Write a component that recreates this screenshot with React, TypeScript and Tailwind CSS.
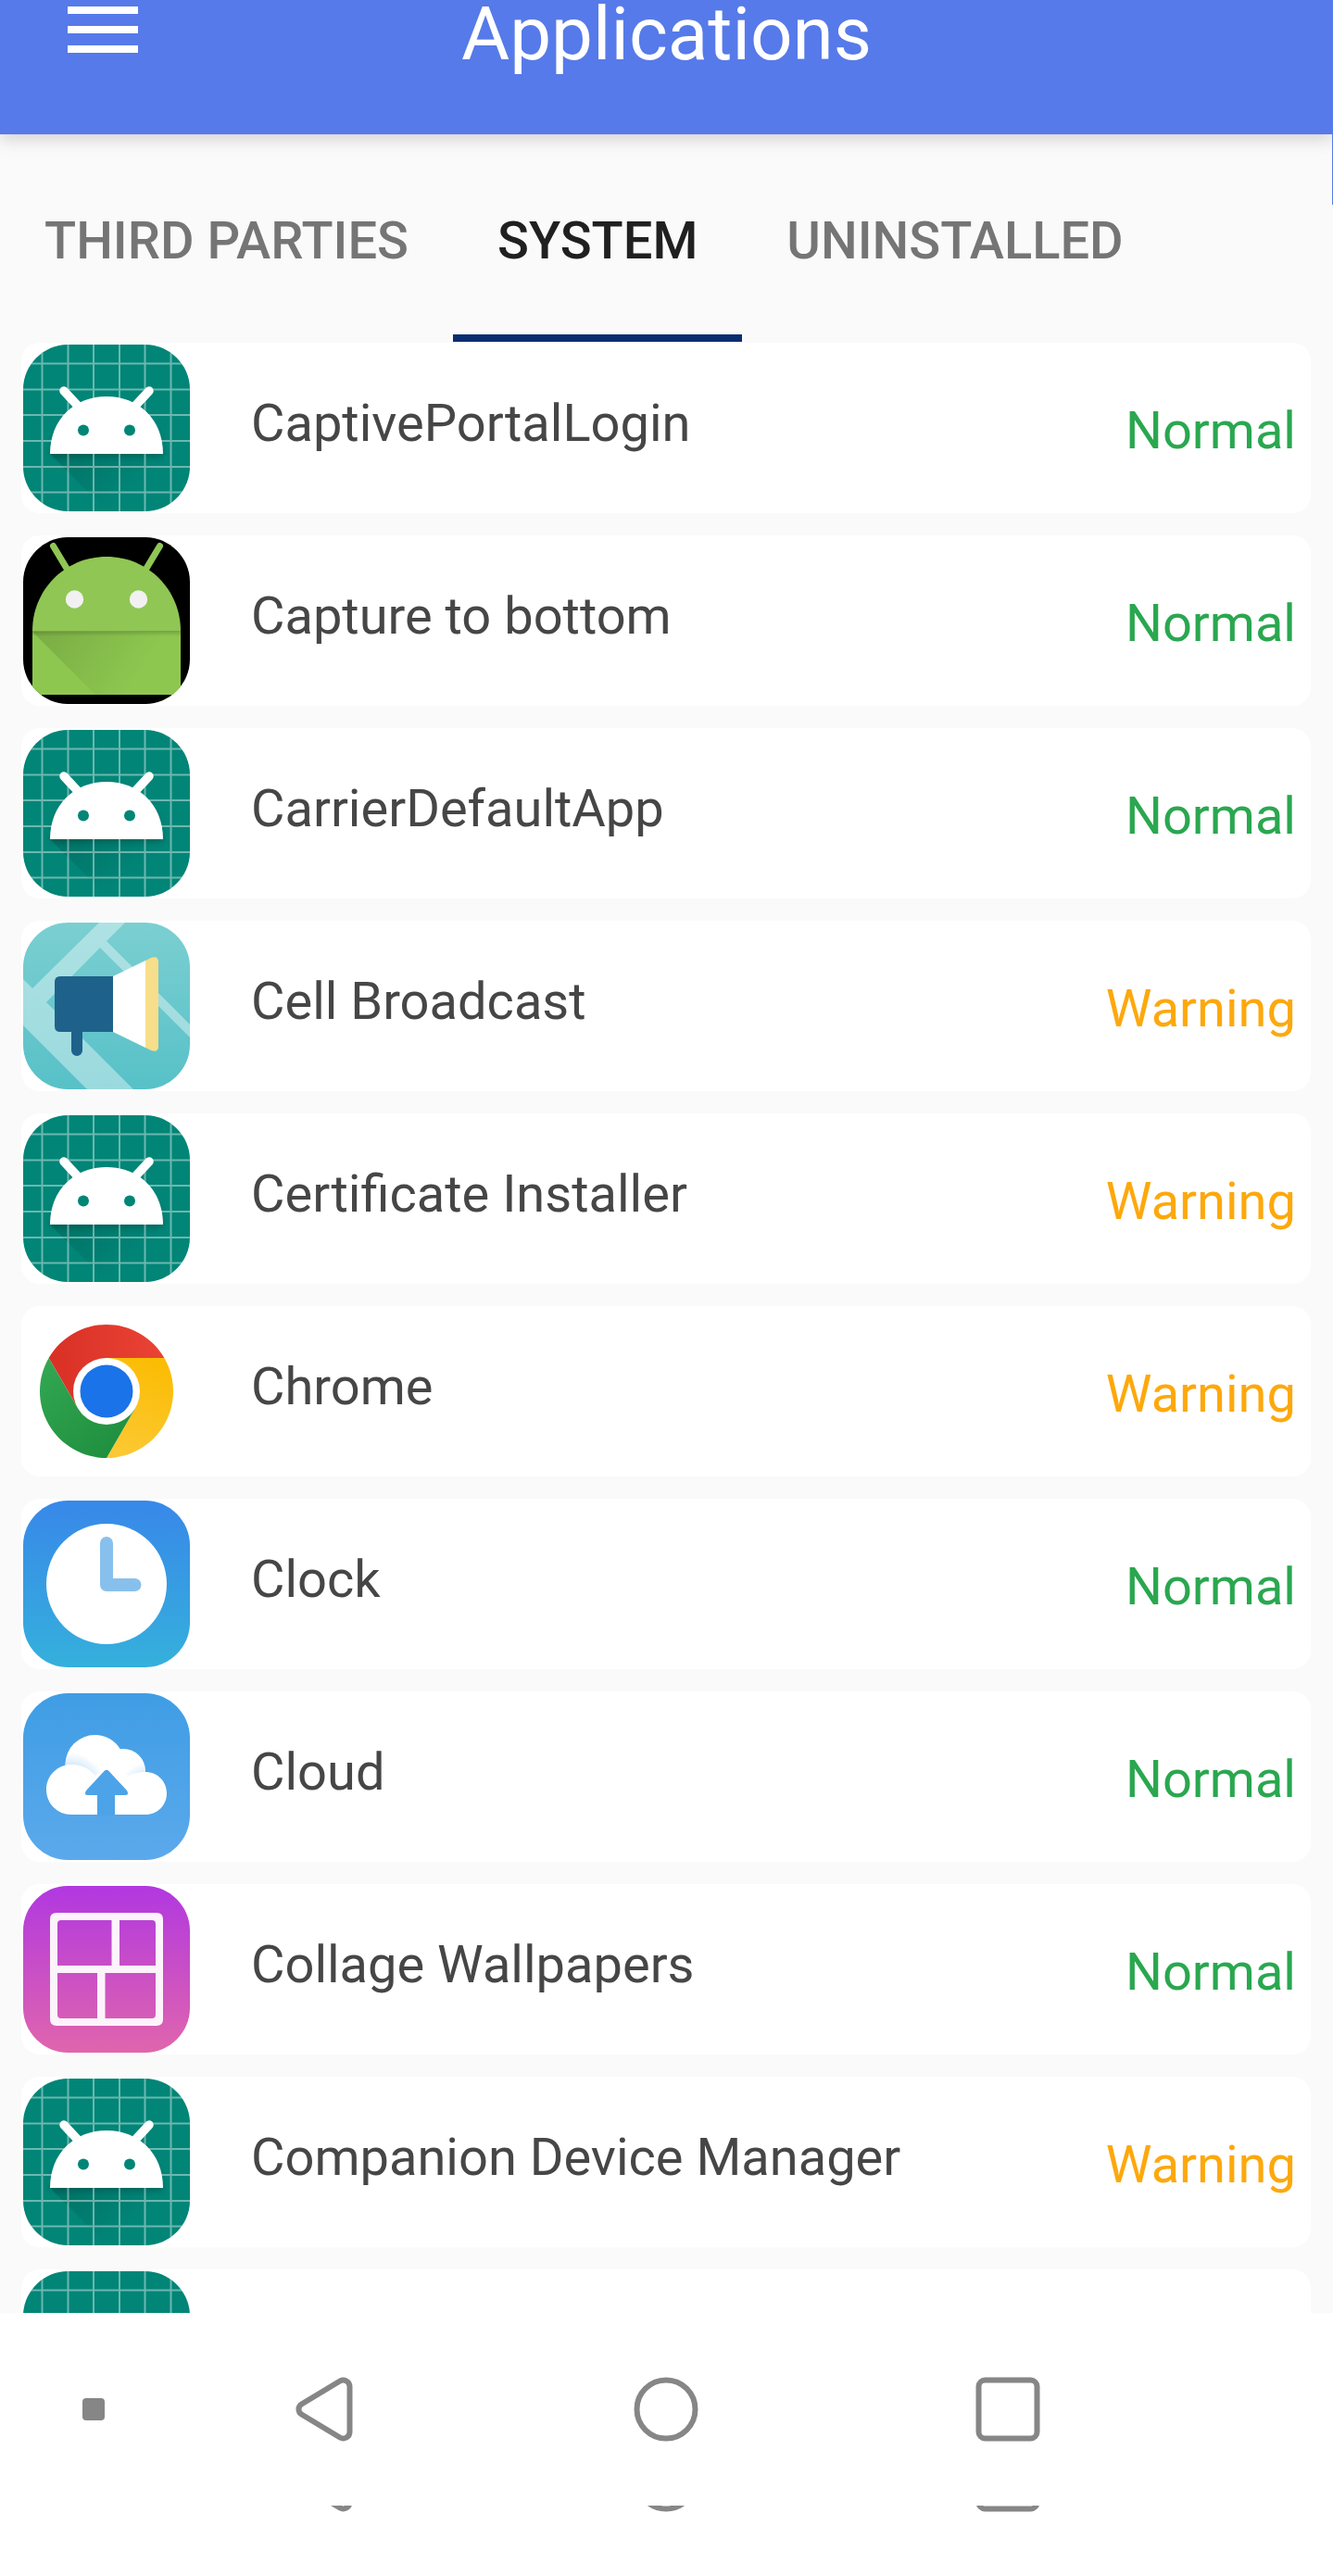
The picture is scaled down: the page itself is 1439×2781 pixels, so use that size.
import type { ReactNode } from "react";

function Tile({ children }: { children: ReactNode }) {
  return (
    <svg viewBox="0 0 180 180" className="size-[180px] shrink-0" aria-hidden="true">
      <defs>
        <clipPath id="tile-clip">
          <path d="M48 0H132C158 0 180 22 180 48V132C180 158 158 180 132 180H48C22 180 0 158 0 132V48C0 22 22 0 48 0Z" />
        </clipPath>
      </defs>
      <g clipPath="url(#tile-clip)">{children}</g>
    </svg>
  );
}

function DefaultIcon() {
  return (
    <Tile>
      <defs>
        <linearGradient id="def-shade" gradientUnits="userSpaceOnUse" x1="45" y1="100" x2="100" y2="170">
          <stop offset="0" stopColor="#000" stopOpacity=".16" />
          <stop offset="1" stopColor="#000" stopOpacity="0" />
        </linearGradient>
        <filter id="def-blur" x="-20%" y="-20%" width="140%" height="140%">
          <feGaussianBlur stdDeviation="3" />
        </filter>
      </defs>
      <rect width="180" height="180" fill="#018577" />
      <path d="M29 118L91 180H180V118Z" fill="url(#def-shade)" />
      <path d="M30 121A60 60 0 0 1 150 121Z" fill="#000" opacity=".2" filter="url(#def-blur)" />
      <path
        d="M20.500 0V180M48.500 0V180M76 0V180M104 0V180M131.500 0V180M159.500 0V180M0 20.500H180M0 48.500H180M0 76H180M0 104H180M0 132H180M0 159.500H180"
        stroke="#fff"
        strokeOpacity=".42"
        strokeWidth="2"
      />
      <path d="M44 50L58 65M136 50L122 65" stroke="#fff" strokeWidth="9.500" strokeLinecap="round" />
      <path d="M29 118C29 80 56 56 90 56S151 80 151 118Z" fill="#fff" />
      <circle cx="65" cy="92.500" r="6" fill="#018577" />
      <circle cx="115" cy="92.500" r="6" fill="#018577" />
    </Tile>
  );
}

function CaptureIcon() {
  return (
    <Tile>
      <defs>
        <linearGradient id="cap-shade" gradientUnits="userSpaceOnUse" x1="10" y1="102" x2="110" y2="170">
          <stop offset="0" stopColor="#000" stopOpacity=".14" />
          <stop offset="1" stopColor="#000" stopOpacity="0" />
        </linearGradient>
        <linearGradient id="cap-edge" x1="0" y1="0" x2="0" y2="1">
          <stop offset="0" stopColor="#000" stopOpacity=".18" />
          <stop offset="1" stopColor="#000" stopOpacity="0" />
        </linearGradient>
      </defs>
      <rect width="180" height="180" fill="#000" />
      <path d="M32.500 9.500L49 37M147.500 9.500L131 37" stroke="#8fc654" strokeWidth="7" strokeLinecap="round" />
      <path d="M10 170V101C10 57 45 21 90 21S170 57 170 101V170Z" fill="#8fc654" />
      <rect x="10" y="102" width="160" height="68" fill="#8dc74f" />
      <path d="M10 102L78 170H170V102Z" fill="url(#cap-shade)" />
      <rect x="10" y="101" width="160" height="6" fill="url(#cap-edge)" />
      <circle cx="55.500" cy="67" r="9.700" fill="#f1f1f1" />
      <circle cx="124.500" cy="67" r="9.700" fill="#f1f1f1" />
    </Tile>
  );
}

function BroadcastIcon() {
  return (
    <Tile>
      <defs>
        <linearGradient id="bc-bg" x1="0" y1="0" x2="0" y2="1">
          <stop offset="0" stopColor="#7bcfd1" />
          <stop offset="1" stopColor="#57c1c8" />
        </linearGradient>
      </defs>
      <rect width="180" height="180" fill="url(#bc-bg)" />
      <path
        d="M82 0H110L90 20 180 110V124L83 27 25 86 119 180H69L0 111V61L10 71Z"
        fill="#fff"
        fillOpacity=".4"
      />
      <path d="M97 58H40Q34 58 34 64V112Q34 118 40 118H52V138A5.500 5.500 0 0 0 64 138V118H97Z" fill="#1e628c" />
      <path d="M97 58L132 41V135L97 118Z" fill="#fff" />
      <path d="M132 41L138 38Q146 35 146 43V133Q146 141 138 138L132 135Z" fill="#f7de8a" />
    </Tile>
  );
}

function ChromeIcon() {
  return (
    <svg viewBox="0 0 180 180" className="size-[180px] shrink-0" aria-hidden="true">
      <defs>
        <linearGradient id="ch-red" x1="0" y1="0" x2="1" y2="0">
          <stop offset="0" stopColor="#d93025" />
          <stop offset="1" stopColor="#ea4335" />
        </linearGradient>
        <linearGradient id="ch-yellow" x1=".6" y1="0" x2=".3" y2="1">
          <stop offset="0" stopColor="#fbbc04" />
          <stop offset="1" stopColor="#fcc934" />
        </linearGradient>
        <linearGradient id="ch-green" x1="0" y1="0" x2=".8" y2="1">
          <stop offset="0" stopColor="#34a853" />
          <stop offset="1" stopColor="#1e8e3e" />
        </linearGradient>
      </defs>
      <path d="M90 54H152.350A72 72 0 0 0 27.650 54L58.820 108Z" fill="url(#ch-red)" />
      <path d="M90 54H152.350A72 72 0 0 1 90 162L121.180 108Z" fill="url(#ch-yellow)" />
      <path d="M121.180 108L90 162A72 72 0 0 1 27.650 54L58.820 108Z" fill="url(#ch-green)" />
      <circle cx="90" cy="90" r="36" fill="#fff" />
      <circle cx="90" cy="90" r="28.500" fill="#1a73e8" />
    </svg>
  );
}

function ClockIcon() {
  return (
    <Tile>
      <defs>
        <linearGradient id="ck-bg" x1="0" y1="0" x2="0" y2="1">
          <stop offset="0" stopColor="#3888e9" />
          <stop offset="1" stopColor="#35b0dc" />
        </linearGradient>
      </defs>
      <rect width="180" height="180" fill="url(#ck-bg)" />
      <circle cx="90" cy="90" r="65" fill="#fff" />
      <path
        d="M90 46V91H120.500"
        fill="none"
        stroke="#88c0ed"
        strokeWidth="14"
        strokeLinecap="round"
        strokeLinejoin="round"
      />
    </Tile>
  );
}

function CloudIcon() {
  return (
    <Tile>
      <defs>
        <linearGradient id="cl-bg" x1="0" y1="0" x2="0" y2="1">
          <stop offset="0" stopColor="#3f9de5" />
          <stop offset="1" stopColor="#5ba9eb" />
        </linearGradient>
        <radialGradient id="cl-left" gradientUnits="userSpaceOnUse" cx="50" cy="104" r="40">
          <stop offset=".6" stopColor="#cfe6fa" />
          <stop offset="1" stopColor="#cfe6fa" stopOpacity="0" />
        </radialGradient>
        <radialGradient id="cl-right" gradientUnits="userSpaceOnUse" cx="136" cy="108" r="34">
          <stop offset=".6" stopColor="#d6eafb" />
          <stop offset="1" stopColor="#d6eafb" stopOpacity="0" />
        </radialGradient>
        <clipPath id="cl-top">
          <circle cx="77.500" cy="77" r="32" />
          <circle cx="108" cy="84" r="24" />
        </clipPath>
      </defs>
      <rect width="180" height="180" fill="url(#cl-bg)" />
      <g clipPath="url(#cl-top)">
        <rect x="40" y="40" width="100" height="80" fill="#fff" />
        <rect x="40" y="40" width="52" height="80" fill="url(#cl-left)" />
        <rect x="92" y="40" width="48" height="80" fill="url(#cl-right)" />
      </g>
      <path
        d="M52 77C63 77 71 81 78 89L90 80 114 89C120 86 126 85 132 85C145 85 155 95 155 108S145 131 132 131H52C37 131 25 119 25 104S37 77 52 77Z"
        fill="#fff"
      />
      <path
        d="M87.500 84Q90 81.500 92.500 84L112 105Q115 110 110 110H99V132H80V110H70Q65 110 68 105Z"
        fill="#4da3e8"
      />
    </Tile>
  );
}

function CollageIcon() {
  return (
    <Tile>
      <defs>
        <linearGradient id="co-bg" x1="0" y1="0" x2="0" y2="1">
          <stop offset="0" stopColor="#b138e0" />
          <stop offset="1" stopColor="#e065ad" />
        </linearGradient>
      </defs>
      <rect width="180" height="180" fill="url(#co-bg)" />
      <path
        fillRule="evenodd"
        d="M36 29H144Q151 29 151 36V144Q151 151 144 151H36Q29 151 29 144V36Q29 29 36 29ZM41 37Q37 37 37 41V86H95.500V37ZM104 37V86H143V41Q143 37 139 37ZM37 94V139Q37 143 41 143H80V94ZM88.500 94V143H139Q143 143 143 139V94Z"
        fill="#fdf3fb"
      />
    </Tile>
  );
}

const apps = [
  { name: "CaptivePortalLogin", status: "Normal", Icon: DefaultIcon },
  { name: "Capture to bottom", status: "Normal", Icon: CaptureIcon },
  { name: "CarrierDefaultApp", status: "Normal", Icon: DefaultIcon },
  { name: "Cell Broadcast", status: "Warning", Icon: BroadcastIcon },
  { name: "Certificate Installer", status: "Warning", Icon: DefaultIcon },
  { name: "Chrome", status: "Warning", Icon: ChromeIcon },
  { name: "Clock", status: "Normal", Icon: ClockIcon },
  { name: "Cloud", status: "Normal", Icon: CloudIcon },
  { name: "Collage Wallpapers", status: "Normal", Icon: CollageIcon },
  { name: "Companion Device Manager", status: "Warning", Icon: DefaultIcon },
];

const tabs = ["THIRD PARTIES", "SYSTEM", "UNINSTALLED"];

function BackShape() {
  return (
    <svg viewBox="0 0 70 70" className="size-[70px]" fill="none" stroke="#868686" strokeWidth="6" aria-hidden="true">
      <path d="M52 4.500A7 7 0 0 1 62.500 10.500V59.500A7 7 0 0 1 52 65.500L10.500 40.500A6.500 6.500 0 0 1 10.500 29.500Z" />
    </svg>
  );
}

function HomeShape() {
  return (
    <svg viewBox="0 0 70 70" className="size-[70px]" fill="none" stroke="#868686" strokeWidth="6" aria-hidden="true">
      <circle cx="35" cy="35" r="31.500" />
    </svg>
  );
}

function RecentShape() {
  return (
    <svg viewBox="0 0 70 70" className="size-[70px]" fill="none" stroke="#868686" strokeWidth="6" aria-hidden="true">
      <rect x="3.500" y="3.500" width="63" height="63" rx="7" />
    </svg>
  );
}

export default function App() {
  return (
    <div className="flex min-h-screen flex-col bg-white font-[Roboto,sans-serif]">
      <header className="relative z-10 grid h-[145px] grid-cols-[1fr_auto_1fr] items-start bg-[#567ae9] shadow-[0_4px_18px_rgba(40,20,20,0.2)]">
        <button type="button" aria-label="Open menu" className="ml-[73px] flex w-19 flex-col gap-[13px] pt-[7px]">
          <span className="h-2 w-full bg-white" />
          <span className="h-2 w-full bg-white" />
          <span className="h-2 w-full bg-white" />
        </button>
        <h1 className="text-[80px] leading-[74px] text-white">Applications</h1>
      </header>

      <main className="flex flex-col bg-[#fafafa]">
        <div className="flex">
          <div role="tablist" aria-label="Application groups" className="flex h-56 flex-1">
            {tabs.map((tab) => (
              <button
                key={tab}
                type="button"
                role="tab"
                aria-selected={tab === "SYSTEM"}
                className={
                  tab === "SYSTEM"
                    ? "border-b-8 border-[#092e70] px-12 pt-3.5 text-[56px] font-medium text-[#202020]"
                    : "border-b-8 border-transparent px-12 pt-3.5 text-[56px] font-medium text-[#757575]"
                }
              >
                {tab}
              </button>
            ))}
          </div>
          <div className="relative z-20 h-19 w-px bg-[#567ae9]" />
        </div>

        <ul className="mt-px flex flex-col gap-6 pr-6 pl-[23px]">
          {apps.map(({ name, status, Icon }) => (
            <li key={name} className="flex h-[184px] items-center rounded-[20px] bg-white pr-4 pl-0.5">
              <Icon />
              <span className="flex-1 pb-2.5 pl-[66px] text-[56px] leading-16 text-[#464646]">{name}</span>
              <span
                className={
                  status === "Normal"
                    ? "pt-1.5 text-[56px] leading-16 text-[#2aa74f]"
                    : "pt-1.5 text-[56px] leading-16 text-[#fda80c]"
                }
              >
                {status}
              </span>
            </li>
          ))}
          <li className="h-[47px] overflow-hidden rounded-t-[20px] bg-white pt-0.5 pl-0.5" aria-label="More applications">
            <DefaultIcon />
          </li>
        </ul>
      </main>

      <nav aria-label="System navigation">
        <div className="grid grid-cols-[202px_295px_1fr_296px_203px] items-center pt-[69px]">
          <button type="button" aria-label="Hide bar" className="ml-[89px] size-6 rounded-[4px] bg-[#868686]" />
          <button type="button" aria-label="Back" className="justify-self-center">
            <BackShape />
          </button>
          <button type="button" aria-label="Home" className="justify-self-center">
            <HomeShape />
          </button>
          <button type="button" aria-label="Recent apps" className="justify-self-center">
            <RecentShape />
          </button>
        </div>
        <div
          aria-hidden="true"
          className="mt-[69px] grid h-[7px] grid-cols-[202px_295px_1fr_296px_203px] content-end overflow-hidden"
        >
          <span />
          <span className="justify-self-center">
            <BackShape />
          </span>
          <span className="justify-self-center">
            <HomeShape />
          </span>
          <span className="justify-self-center">
            <RecentShape />
          </span>
        </div>
      </nav>
    </div>
  );
}
